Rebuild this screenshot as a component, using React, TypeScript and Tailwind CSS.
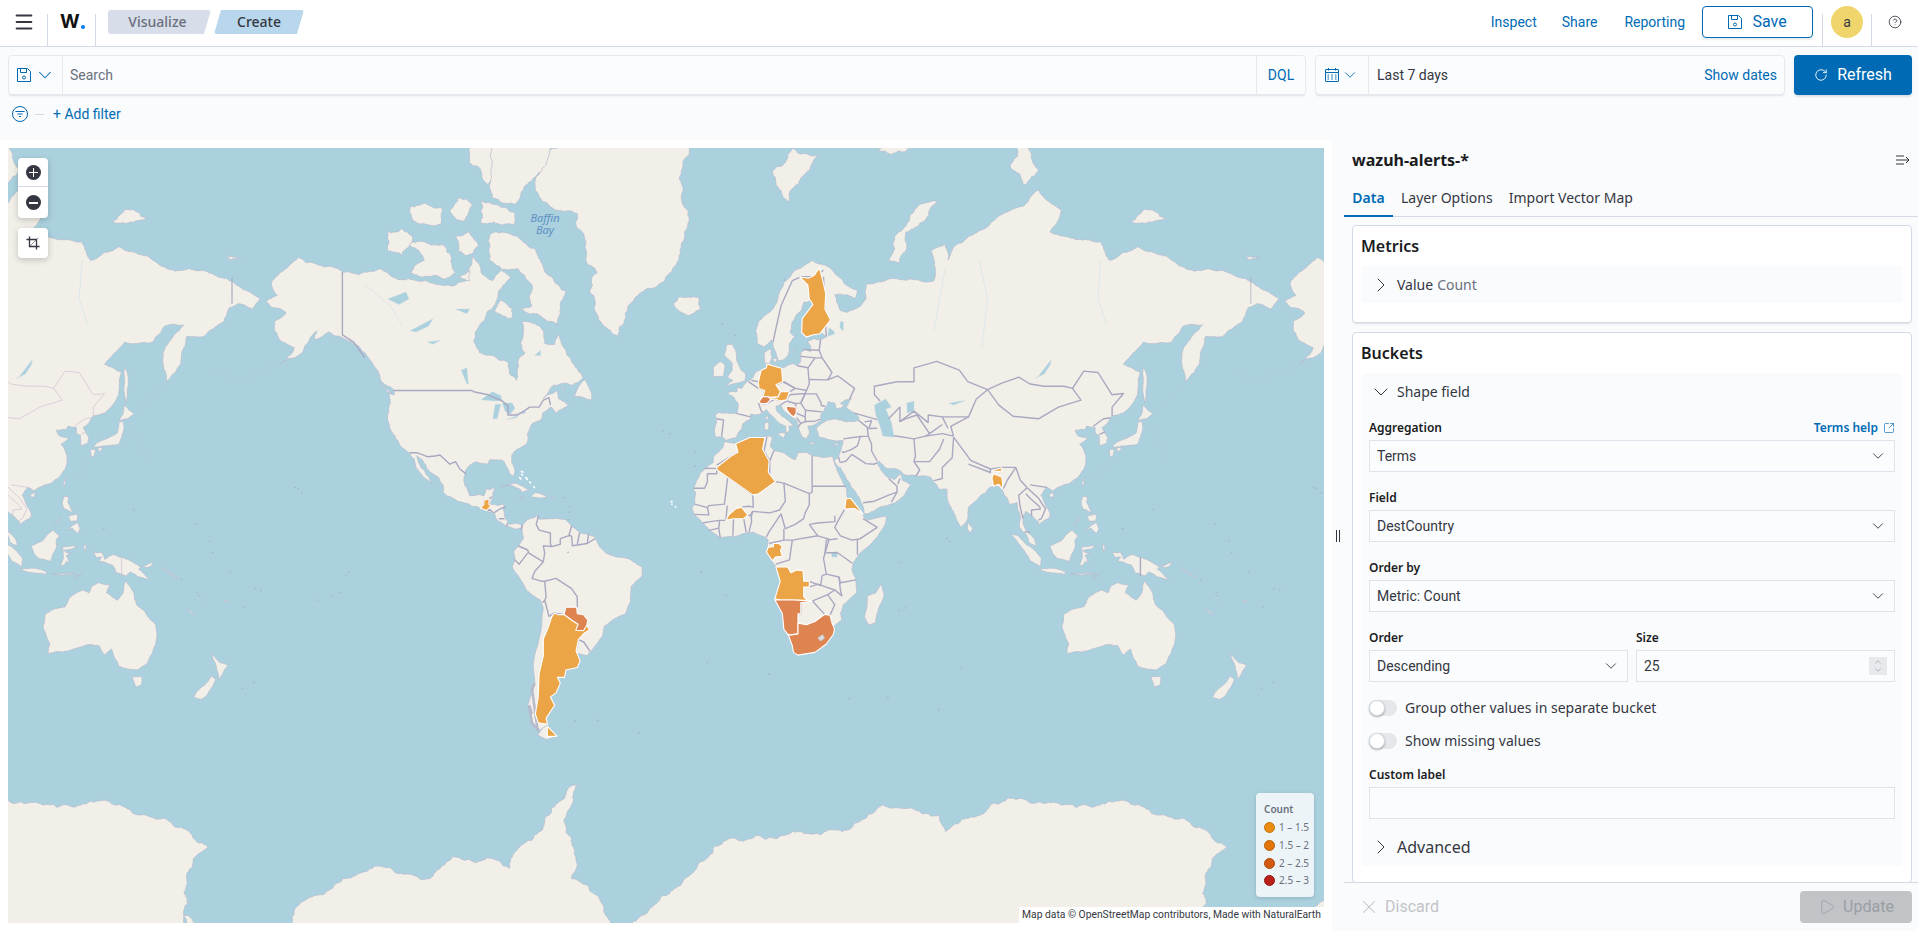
import React from 'react';
import { ChevronDown, ChevronRight, ChevronUp, RotateCw, CircleHelp, SquareArrowOutUpRight, X, Play, Menu } from 'lucide-react';

// Web mercator fitted to the screenshot, in page pixels
const OFFSET = 1018.8;
const toXY = (lon: number, lat: number) => [741.4 + 2.83 * lon, 550 - 162.1 * Math.asinh(Math.tan((lat * Math.PI) / 180))];
const proj = (lon: number, lat: number) => {
  const [x, y] = toXY(lon, lat);
  return `${x.toFixed(1)} ${y.toFixed(1)}`;
};
const poly = (pts: number[][]) => 'M' + pts.map(p => proj(p[0], p[1])).join('L') + 'Z';
const line = (pts: number[][]) => 'M' + pts.map(p => proj(p[0], p[1])).join('L');

// Breaks the long straight coast segments up so they read as coastline
const rough = (pts: number[][], k: number, seed: number) => {
  let s = seed * 7919 + 13;
  const rnd = () => {
    s = (s * 16807) % 2147483647;
    return (s % 1000) / 500 - 1;
  };
  const out: number[][] = [];
  const split = (a: number[], b: number[]) => {
    const dx = b[0] - a[0];
    const dy = b[1] - a[1];
    const len = Math.hypot(dx, dy);
    if (len < 2.5) {
      out.push(b);
      return;
    }
    const r = rnd() * k;
    const m = [(a[0] + b[0]) / 2 - dy * r, (a[1] + b[1]) / 2 + dx * r];
    split(a, m);
    split(m, b);
  };
  const xy = pts.map(p => toXY(p[0], p[1]));
  xy.forEach((p, i) => split(p, xy[(i + 1) % xy.length]));
  return 'M' + out.map(p => `${p[0].toFixed(1)} ${p[1].toFixed(1)}`).join('L') + 'Z';
};

const LAND: number[][][] = [
  // Eurasia
  [[-9,37],[-9.5,38.7],[-8.8,41.5],[-9.2,43.1],[-8,43.7],[-4,43.4],[-1.8,43.4],[-1.2,45],[-1.2,46],[-2.5,47.3],[-4.7,48.2],[-4.7,48.6],[-3,48.8],[-1.6,48.7],[-1.6,49.7],[0.1,49.5],[1.6,50.8],[3.2,51.4],[4.2,52.1],[4.8,53],[6.9,53.5],[8.5,53.7],[8.9,54.2],[8.2,55.5],[8.1,57],[10.5,57.7],[10.5,56.5],[10.9,56.3],[10,55],[11,54.4],[12.5,54.4],[14.2,53.9],[16.5,54.6],[18.5,54.8],[19.8,54.4],[21,55.3],[21,57],[22.5,57.7],[24.4,57.2],[24.4,58.3],[23.5,59.2],[25.5,59.6],[28,59.5],[30,60],[28.5,60.6],[25.5,60.3],[22.9,59.9],[21.3,60.7],[21.5,62.5],[25,65],[24.7,65.8],[22,65.5],[21.2,64.3],[18,62.5],[17.2,60.8],[18.8,60],[17,58.7],[16.5,56.5],[14.3,55.5],[13,55.4],[12.5,56.3],[11.2,58.8],[10.6,59.4],[8,58.1],[5.6,58.7],[5,61],[6,62.5],[10,64],[13,66.5],[15,68.3],[19,69.8],[25,71],[31,70.2],[33,69.4],[41,67.2],[40,66.1],[35,66.7],[33,66.6],[35,64.3],[37.5,64],[40.5,64.6],[44,66],[44,68],[53,68.8],[60,68.7],[68,68.5],[67,72],[72,72.8],[73,71],[75,72.5],[80,73.5],[87,74.5],[100,76.4],[105,77.6],[113,76],[109,74],[113,73.6],[127,73],[130,71],[140,72.5],[150,71.5],[160,69.7],[170,69.8],[178,68.8],[185,67.2],[190,66],[187,64.5],[182,65.3],[179,64.7],[177,62.5],[170,60],[164,60],[163,58],[162,55],[160,53],[156.7,51],[155.7,57],[160,60.5],[163,62],[156,61.7],[152,59],[142,59],[135,54.7],[141,53],[140,48],[135,43.5],[131,42.7],[129.5,41],[127.5,39.7],[129.5,37],[129,35.2],[126.5,34.5],[126.5,37.5],[125,38],[125,39.6],[122,40],[121.5,39],[118,39],[119,37.3],[122.5,37],[119.5,35],[121.8,31.5],[121.5,28.5],[119,25],[116,22.9],[113,22],[110,20.5],[108,21.6],[105.8,19],[109,13],[109,11.5],[105,8.7],[105,10],[102,12.5],[100.5,13.5],[99.5,11],[99.5,9.2],[100.5,7],[103.5,4],[104,1.3],[101.5,2.7],[100.3,6],[98.3,8],[98.5,12],[97.5,16.5],[94.5,16],[94,18],[92,21.5],[90,22],[88,21.7],[86.5,20],[82,16.5],[80.2,15],[80,11],[77.5,8],[76,10.5],[73,17],[72.7,21],[70,21],[69,22.5],[67,24.8],[62,25.2],[57.5,25.7],[56,27],[51,27.8],[48.5,30],[48,29.5],[50,26.5],[51.5,25],[54,24.2],[56.3,26],[56.8,24],[59.8,22.5],[57.7,19],[55,17],[52,15.7],[45,12.8],[43.3,12.7],[42.7,16],[39,21.5],[35,28],[34.5,28],[32.6,30],[34.3,31.2],[36,36],[32,36.1],[30.5,36.3],[27.5,37],[26.5,39.5],[29,41],[33,42],[37,41.2],[41.6,41.5],[41,43],[37,45],[39,47.2],[35,46],[36.5,45.3],[33.5,44.5],[33,46],[30.7,46.4],[28,43],[28.2,41.5],[26.5,40.7],[23.5,40],[24,38],[23,36.5],[21.5,37],[20,40],[19.5,41.7],[16,43.5],[13.7,45.5],[12.3,45.3],[12.5,44],[16,41.8],[18.5,40.2],[16.8,40],[17,39],[16,38],[15.7,40],[12.5,41.5],[10.5,43],[8.8,44.4],[6.5,43.2],[3.2,43.2],[3.2,41.9],[0.5,40.7],[-0.3,39],[-2,36.8],[-5.5,36],[-6.5,37]],
  // Africa
  [[-5.9,35.8],[-2,35.2],[3,36.9],[10,37.3],[11,36.9],[10.2,34.3],[11.5,33.1],[15.3,32.3],[19,30.3],[20,32.5],[23,32.6],[25,31.6],[29,31],[32.3,31.3],[32.6,30],[33.7,27.5],[35.5,24],[37.2,21],[37.3,18.5],[39.5,15.5],[43,12.5],[43.3,11.5],[44.5,10.5],[51.2,11.9],[50.8,9],[48,4.5],[42,-1],[39.5,-4.5],[39,-7],[40.5,-10.5],[40.7,-15],[36,-19],[35,-22],[35.5,-24],[32.8,-26],[32.5,-28.5],[30,-31.5],[26,-34],[20,-34.8],[18.4,-34],[18,-32],[15,-27],[14.5,-22],[11.8,-17],[13.7,-11],[12,-5.5],[9,-1],[9.5,3.5],[8.5,4.5],[5,5.8],[4.5,6.3],[1,5.9],[-2,4.8],[-7.5,4.4],[-11,6.7],[-13.2,9],[-15,11],[-16.8,12.5],[-17.5,14.7],[-16.5,16],[-16.2,20],[-17,21],[-14.5,26.2],[-10,29.5],[-9.7,31.5],[-6.5,34]],
  // North America
  [[-168,65.6],[-164,66.5],[-166,68.3],[-163,69.5],[-156.5,71.3],[-150,70.5],[-141,69.6],[-135,69.3],[-128,70],[-125,69.5],[-115,68.5],[-108,68],[-102,67.8],[-97,68.5],[-95,71.5],[-92,69.5],[-88,68.5],[-85,69.8],[-81.5,69],[-86,66.5],[-87,65.2],[-90,64],[-93,61.5],[-94.5,59],[-92.5,57],[-88,56.5],[-82.5,55.2],[-82,52.8],[-79.5,51.3],[-79,52],[-79,55],[-76.5,57],[-78,58.8],[-77.5,62.5],[-73,62.2],[-70,61],[-69.5,58.8],[-66,58.5],[-64.5,60.3],[-61.5,56.5],[-57,53],[-56,51.8],[-60,50.2],[-66.5,50.2],[-70,47.2],[-65,49],[-64.5,47],[-61,45.5],[-65.5,43.5],[-67,45],[-70,43.7],[-70.5,41.8],[-74,40.6],[-75.5,38],[-76,35],[-78,34],[-81,32],[-81.2,29.5],[-80,26.8],[-80.5,25.2],[-81.8,26],[-82.8,28],[-84,30],[-89,30.3],[-89.5,29],[-94,29.7],[-97.2,27.5],[-97.8,22.5],[-95.8,18.7],[-91,18.8],[-90.5,21],[-87,21.5],[-88,18],[-88.8,15.8],[-84,15.9],[-83.5,11],[-82,9],[-79.5,9.5],[-77.4,8.7],[-77.5,7.5],[-80,7.3],[-83,8.3],[-85.8,10],[-87.5,13],[-92,14.5],[-96,15.8],[-102,18],[-105.5,20],[-105.5,22.5],[-109,26],[-112.5,30],[-114.7,31.7],[-112,27],[-110,24],[-109.5,23],[-112,24.7],[-115,28],[-117.2,32.5],[-120.5,34.5],[-122.5,37.5],[-124.3,40.3],[-124,46],[-124.7,48.4],[-122.5,48],[-123,49.2],[-127,51],[-130,54.5],[-133,57],[-137,58.7],[-141,59.8],[-146,60.8],[-151,59.5],[-150,61],[-153,59],[-158,56],[-163,54.8],[-158,58],[-162,59],[-165,61],[-165,62.5],[-161,64],[-166,64.7]],
  // South America
  [[-77.4,8.7],[-75.5,10.7],[-72,12],[-71.5,10.8],[-68,11],[-62,10.7],[-60,8.5],[-57,6],[-52,4.8],[-50,1],[-48,-1],[-44,-2.5],[-40,-3],[-37,-5],[-35,-6],[-35,-9],[-39,-13],[-39.2,-18],[-41,-22],[-45,-23.7],[-48.5,-26],[-49,-29],[-52.5,-33],[-54.5,-35],[-58,-34.3],[-57,-36.5],[-58,-38.3],[-62,-39],[-62.5,-41],[-65,-41],[-64,-42.5],[-65.5,-45],[-67.5,-46],[-66,-48],[-69,-51],[-68.5,-52.5],[-71,-53.5],[-74,-52.5],[-75.5,-48],[-73,-42],[-73.5,-37],[-71.5,-30],[-70,-20],[-71,-17.5],[-76,-14],[-81,-6],[-80,-3],[-80.5,-0.5],[-78.7,1.5],[-77,4],[-77.5,7]],
  [[-68.6,-52.7],[-65.2,-54.8],[-69,-55.5],[-72,-54.5],[-70,-53]],
  // Greenland and the Arctic islands
  [[-73,78.2],[-68,80.2],[-60,82],[-45,82.7],[-30,83.5],[-22,82],[-18,80.5],[-19,76],[-20,74],[-22,71.5],[-27,68.5],[-33,67.5],[-38,65.7],[-41,63],[-43.5,60],[-46,60.7],[-49,62],[-51.5,64],[-53.5,67],[-51,69.5],[-54.5,70.5],[-55,73],[-58,75.7],[-66,76],[-71,77]],
  [[-65,61.8],[-66.5,62.5],[-72,63.8],[-78,64.5],[-74,65],[-74,68],[-79,70],[-85,70],[-89,71],[-89,73.7],[-81,73.7],[-76,72.8],[-71,71],[-67,69],[-62,67],[-64,65]],
  [[-117,69.5],[-105,68.7],[-101,69.5],[-105,72.7],[-109,72.7],[-118,72.7],[-112,71]],
  [[-125,72],[-120,71.5],[-116,73.5],[-120,74.3],[-125,74]],
  [[-88,77],[-80,76.5],[-76,78],[-68,80.8],[-62,82.5],[-75,83],[-90,82],[-90,79]],
  [[-92,74.8],[-80,74.7],[-80,75.7],[-92,76.8]],
  [[-96,79.5],[-90,78],[-88,80.5],[-93,81.3]],
  [[-116,75],[-106,74.8],[-106,76.2],[-117,76.3]],
  [[-100,72],[-97,71.5],[-93,72.5],[-96,74],[-101,73.7]],
  [[-103,76],[-98,75],[-95,76.5],[-100,77]],
  [[-87,64],[-81,63],[-81,64.5],[-85,65.8]],
  [[-100,69],[-96,68.5],[-96,69.8]],
  [[-59,47.7],[-53,46.7],[-53,48.5],[-55.5,51.5],[-57.5,50]],
  [[-64,49.9],[-62,49.4],[-63,49.2]],
  [[-128,50.8],[-123.5,48.4],[-125,48.7]],
  [[-22,66.3],[-24,65.3],[-22,64.2],[-18.5,63.5],[-14.5,64.5],[-14.8,66],[-18,66.2]],
  [[11,79],[15,77],[17,76.7],[21,78.5],[27,80],[18,80.4]],
  [[52,71],[56,70.7],[58,74],[69,76.8],[62,76.2],[54,73.5]],
  [[95,79.2],[100,78],[105,79],[98,80.8]],
  [[138,75],[145,74.9],[150,75.3],[142,76]],
  [[179,71],[183,71.3],[178,71.5]],
  [[48,80.3],[58,80.2],[62,81],[52,80.9]],
  // Britain and the Mediterranean
  [[-5.5,50.1],[1.3,51.2],[1.6,52.7],[-0.2,53.6],[-1.7,55.5],[-2,57.5],[-3.2,58.6],[-5.2,58.5],[-6,56.5],[-3.2,54.9],[-3.2,53.4],[-5,52],[-3,51.3]],
  [[-10,52],[-6.2,52.2],[-5.7,54.6],[-7.5,55.3],[-10,54]],
  [[8.2,39],[9.7,39.2],[9.5,41.2],[8.2,40.8]],
  [[8.7,41.6],[9.5,42],[9.4,43],[8.7,42.5]],
  [[12.5,38],[15.6,38.2],[15.1,36.7]],
  [[23.6,35.5],[26.2,35.2],[24.8,34.9]],
  [[32.4,34.8],[34.5,35.6],[33.5,34.6]],
  [[10.9,55.7],[12.5,56],[12.3,55]],
  [[18.2,57],[19,57.9],[18.8,57.3]],
  // Japan and the east
  [[141.9,39.5],[141.5,41.4],[140,41],[139.5,38.2],[136.7,37],[132.5,35.5],[131,34.2],[132.5,34.2],[135.5,34.5],[136.9,34.6],[140,35],[141,37]],
  [[140.2,41.6],[143.2,42],[145.4,43.3],[142,45.5],[141.5,43.3]],
  [[130,33.5],[131.8,33.5],[131,31.2],[130.3,31.4]],
  [[132.5,33.8],[134.5,34.2],[134,33.4],[133,32.8]],
  [[142,54.2],[143.2,52.5],[143,49.2],[142.5,46],[142,48],[142,51.5]],
  [[120.2,23],[121.5,25.2],[121,22]],
  [[108.8,19.3],[110.5,20],[110.2,18.5],[109,18.3]],
  [[120.5,18.5],[122.3,18.4],[122,16.5],[124,13],[122,14],[120.7,14.3],[120,16.5]],
  [[125.5,9.7],[126.3,7.5],[125.5,5.8],[123.5,7.7],[122,7.2],[123.7,8.7]],
  [[122,11.8],[125.5,12.5],[125.2,10.2],[123,10]],
  [[117.2,8.5],[119.5,11.3],[119,10]],
  [[80,9.7],[81.8,7.5],[80.8,6],[79.8,7.5]],
  // Indonesia and Oceania
  [[95.3,5.6],[97.5,5.2],[100.5,2],[103.5,0],[106,-3],[105.8,-5.8],[102.3,-4],[100.4,-1],[98.5,1.7]],
  [[105.2,-6.8],[108.5,-6.5],[111,-6.5],[114.5,-7.8],[114.4,-8.7],[110,-8.1],[106.5,-7.4]],
  [[109,1.5],[111.4,2.5],[113,3.2],[116.7,7],[119,5],[117.8,3.5],[118,1],[116.5,-2],[116,-4],[114.5,-3.6],[111.7,-3],[110,-1.2]],
  [[119.5,-5.5],[120.5,-2.7],[120,0.8],[121,1.2],[125,1.5],[123.5,0.3],[120.5,0],[121.5,-1],[123.2,-0.9],[121.5,-2],[122.5,-4.8],[121.5,-4],[120.5,-5.5]],
  [[127.5,2],[128.5,1.5],[128,-0.7],[127.7,0.5]],
  [[116.2,-8.4],[119,-8.3],[123,-8.3],[125,-8.5],[120,-8.9]],
  [[124,-10],[127,-8.4],[125,-9.2]],
  [[131,-0.8],[134,-0.8],[135,-3.3],[138,-1.6],[141,-2.6],[145,-4.3],[147.8,-6],[147,-6.8],[150.8,-10.3],[147,-9.5],[144,-7.7],[142.5,-9.2],[139,-8],[138,-5.5],[133,-4],[134,-2.5],[132,-2.7]],
  [[148.3,-5.7],[152.2,-4.2],[151.5,-5.6],[150,-6.2]],
  [[155,-6],[156,-7],[160,-9.5],[161,-10],[158,-8]],
  [[113.2,-26],[114,-22],[116.7,-20.6],[121,-19.7],[122.3,-17],[125,-15],[127,-14],[129.5,-15],[130.8,-12.4],[132.8,-11.5],[136.8,-12.2],[135.7,-15],[139.5,-17.5],[141.5,-15],[142.5,-10.8],[145.3,-15],[146.3,-19],[149,-21],[153,-25.5],[153.5,-28.5],[152.5,-32.5],[150,-37.3],[146.5,-39],[143.5,-38.8],[140,-38],[138.2,-35],[137.5,-33],[135,-34.8],[133,-32],[129,-31.7],[124,-33],[120,-33.9],[115,-34.3],[115.7,-31.5]],
  [[144.7,-40.8],[148.2,-40.8],[148,-43],[146,-43.6]],
  [[172.7,-34.5],[174.5,-36],[175.8,-37],[178.5,-37.7],[177,-39.5],[175.3,-41.6],[174.9,-39.5],[174.5,-38]],
  [[172.7,-40.6],[174.2,-41.5],[172.8,-43.7],[171,-45.7],[169,-46.6],[166.5,-46],[168.5,-44],[171,-42.5]],
  [[164,-20.2],[167,-22.2],[166.2,-22]],
  [[177.2,-17.5],[178.5,-17.8],[178,-18.2]],
  [[44.5,-16.2],[47.5,-15],[49.3,-12],[50.4,-15.5],[47.5,-24.8],[45,-25.5],[43.5,-23],[44.3,-20]],
  // Caribbean
  [[-84.8,22],[-80,23],[-75,20.7],[-77.5,19.9],[-78,20.8],[-82,22.4]],
  [[-74.4,18.5],[-72.8,19.9],[-68.5,18.6],[-71,18],[-72.5,18.2]],
  [[-78.3,18.4],[-76.3,18],[-77,17.8]],
  [[-67.2,18.4],[-65.7,18.3],[-66.5,18]],
  // Antarctica, over one whole turn of the map
  [[-197,-78],[-190,-79.5],[-170,-80],[-162,-79.5],[-158,-77.7],[-145.7,-76],[-135,-74.5],[-128,-73.8],[-110,-75],[-102,-72.8],[-90,-73],[-82,-74],[-71,-70],[-67,-67],[-61,-64],[-58,-63.5],[-62,-70],[-60,-75],[-45,-79],[-35,-78],[-28,-76.5],[-20,-75],[-12,-73],[-5,-71],[5,-70.5],[20,-70],[30,-70],[40,-69],[50,-66.5],[60,-67],[70,-68],[72,-70],[78,-68.5],[88,-66.5],[100,-65.8],[115,-66.5],[130,-66],[140,-66.5],[150,-68],[160,-69.5],[166,-70.5],[171.6,-71.8],[164,-74.5],[163,-76.3],[163,-78],[163,-85],[-197,-85]],
];

const WATER: number[][][] = [
  [[47,45.5],[51,47],[53,45],[51,44.5],[53,41],[54,37],[50,37.3],[49,40],[47.5,43]],
  [[58.5,46],[61,46.5],[61,44],[58.5,43.5]],
  [[73.5,46],[79,46.6],[75,45.5]],
  [[103.7,51.7],[105,52.2],[109.5,55.7],[109,54.5],[107,52.7]],
  [[30.5,60],[33,60.5],[32.5,61],[31,61.5]],
  [[34.8,61.5],[36,61],[36,62.5],[35,62.5]],
  [[31.8,-1],[34,-0.5],[33.8,-2.5],[32,-2.5]],
  [[-92,46.8],[-88,48.7],[-85,47.8],[-84.6,46.6],[-87,46.5]],
  [[-87.8,42],[-86.3,42],[-85,45.7],[-87,45.7]],
  [[-84.5,46],[-81,46],[-80,44.7],[-81.7,43.2],[-83.5,44]],
  [[-83,41.8],[-79,42.8],[-79.5,42.3]],
  [[-79.7,43.3],[-76.3,44],[-76.5,43.4]],
  [[-125,66],[-118.5,67],[-117.5,66],[-121,65.2]],
  [[-117,61],[-109,63],[-110.5,61.8],[-115,60.8]],
  [[-111,59],[-106.5,59.3],[-109,58.6]],
  [[-99,53.5],[-97,54],[-96.5,50.5],[-97,50.5]],
  [[-73,56.5],[-71,57.5],[-71,56.5]],
  [[-101,64.5],[-96,64.5],[-97,63.8]],
];

const RIVERS: number[][][] = [
  [[129,62],[126,66],[127,71]],
  [[68,61],[70,66],[72,70]],
  [[85,58],[87,66],[84,71]],
  [[-120,62],[-124,65],[-133,68]],
];

const BORDERS: number[][][] = [
  [[-123,49],[-95.2,49],[-94.6,48.7],[-89.5,48],[-84.5,46.5],[-82.5,45.3],[-82.5,43],[-79,43],[-76.5,44.2],[-74.8,45],[-71.5,45],[-70,46.7],[-68,47.3],[-67.5,45.5]],
  [[-141,69.6],[-141,60.3],[-137,59],[-133,56]],
  [[-117.1,32.5],[-114.7,32.5],[-111,31.3],[-108.2,31.5],[-106.5,31.8],[-103,29],[-101,29.8],[-99.5,27.5],[-97.2,25.9]],
  [[-92.2,14.6],[-91,16],[-91,17.3],[-89.2,17.8],[-88.2,18.5]],[[-89.2,17.8],[-89.2,15.8],[-88.3,15.7]],[[-90,13.8],[-89.2,14.3],[-87.8,13.2]],[[-87.5,13],[-85,14.5],[-83.2,15]],[[-85.7,11],[-83.7,11]],[[-83,8.3],[-82.6,9.5]],[[-77.4,8.7],[-77.9,7.2]],
  [[-71.7,12],[-72.5,9],[-71.5,7],[-67.5,6],[-67.5,2],[-67,1.2],[-70,1.5],[-69.5,-1],[-70,-4.2]],[[-78.8,1.4],[-75.5,0],[-75.2,-1],[-70,-4.2]],[[-80.3,-3.4],[-78.5,-5],[-75.5,-1]],[[-60,8.5],[-61,5],[-60,5.1]],[[-67,1.2],[-64,2],[-64,4],[-60.7,5.2]],[[-57.2,6],[-58,2]],[[-54,5.7],[-54.5,2.3]],[[-60,5],[-59.7,1.5],[-54.5,2.3],[-51.7,4]],[[-70,-4.2],[-73,-7.5],[-74,-10],[-70.5,-11],[-69.5,-11]],[[-69.5,-11],[-65.5,-10],[-60,-13.5],[-58,-16.3],[-58,-20]],[[-69.5,-11],[-69,-16.5],[-69.5,-17.5]],[[-70.3,-18.3],[-69.5,-17.5],[-68,-22.8],[-66.2,-21.8],[-62.7,-22.2]],[[-58.4,-33.5],[-57.6,-30.2],[-55.7,-30.9],[-53.5,-33.7]],
  [[-1.8,43.4],[3.2,42.5]],[[2.5,51],[6,49.5],[8.2,49],[7.6,47.6]],[[6,46.2],[7,44],[7.5,43.8]],[[3.5,51.3],[6,51]],[[-8.8,42],[-6.3,41.7],[-7,37.2]],[[8.7,54.9],[9.7,54.8]],
  [[14.6,51],[19,49.5],[23,49],[24,50.5],[23.5,54],[19.8,54.4]],[[12.2,50.3],[15,51],[19,49.5],[17,48.7]],[[17,48],[22.5,48.3],[23,49]],[[16,46.8],[17,48]],[[22.5,48.3],[21,46],[19,45.9],[16,46.5]],[[21,46],[22.5,48.2],[26.5,48.2],[28.2,46],[28.2,45.4],[29.6,45.2]],[[22.7,44.2],[28.5,43.8]],[[19,46],[19.3,45],[19.4,43.5],[22.5,42.5],[22.7,44.2],[21,46]],[[22.7,41.3],[26.5,41.4]],[[19.5,42.3],[21,40.8],[20,39.7]],[[21,40.8],[22.7,41.3],[22.5,42.5]],[[13.7,45.5],[16,46.5]],[[7,45.9],[9,45.9],[12,47],[13.7,46.5]],
  [[23.5,54],[26,56],[28.5,56],[32,53],[30.5,51.4],[24,51.5]],[[30.5,51.4],[34,52.3],[40,49.5],[38.2,47]],[[21,56.3],[26,56]],[[21.8,57.6],[27.5,57.5],[28,59.5]],[[28.5,56],[27.5,57.5]],[[11.2,59],[12,61],[14,65],[18,68.5],[21,69]],[[21,69],[25.8,69],[29,69.8]],[[30,60],[29.5,64],[29,69]],
  [[26.5,41.5],[28,41.9]],[[36,36.5],[42,37.2],[44.8,37.3],[44.5,39.7],[41.6,41.5]],[[44.8,37.3],[46,35],[46,33],[48,30]],[[42,37.2],[41,34.5],[38.8,33.4],[36,32.5],[35.7,33]],[[39,32],[44,29.2],[47,29],[48,29.5]],[[43,16.5],[47,17],[52,19],[55,20],[55,22],[52,24.5]],[[55,20],[53,16.7]],[[35,29.5],[37,30],[39,32]],[[34.3,31.2],[34.9,29.5]],[[40,43.5],[48,41.8]],[[43.5,41.2],[46,41.5],[45,39.4],[48,39.5]],[[55.3,22.7],[56,24.5]],
  [[61,36.5],[61.5,31.5],[61,29.8],[63,27.2],[61.6,25.2]],[[54,37.4],[61,36.5]],[[61,29.8],[66.5,29.8],[70,33.5],[71.5,36.5]],[[61,36.5],[65,37.3],[71,38],[74.9,37.3]],[[68,23.8],[71,24.5],[71,28],[74.5,31],[75,37]],[[75,37],[79,32.5],[81,30.2],[88,27.5],[92,28],[97,28]],[[80.2,29],[88,26.4],[88,27.5]],[[97,28],[94,24],[93,22],[92.3,21]],[[97,28],[98.5,24],[101,21.5]],[[101,21.5],[98,19],[98.5,15],[99.5,11]],[[101,21.5],[105,18],[107,15],[107.5,14.5],[106,11],[105,10.5]],[[100.5,19.5],[102,18],[105.5,15],[105.5,14]],[[102,22.4],[108,21.6]],[[102.5,12],[102.5,14],[105.5,14.3]],[[100,6.5],[102,6.2]],
  [[49,46.5],[47,48],[47,50],[55,51],[61,51],[61,54],[69,55.3],[77,53.5],[80,51],[87,49.2]],[[87,49.2],[83,47],[80.3,42.5],[74,40],[74.9,37.3]],[[80.3,42.5],[71,42.5],[66,43],[66,41],[61,44],[56,41.3],[56,45],[52,42]],[[71,42.5],[73,39.5]],[[56,41.3],[58,42],[62,43],[66.5,38]],[[65,37.3],[66.5,38],[71,40.5]],
  [[87,49.2],[92,50.7],[98,52],[102,50.5],[107,50],[114,50],[117,49.5],[120,46.7],[112,45],[105,42],[96,42.7],[91,45.5],[87,49.2]],[[117,49.5],[121,53.3],[126,53],[131,48],[135,48.3],[131,45],[131,42.7]],[[124.3,40],[128,42],[130.5,42.3]],[[126.5,37.8],[128.5,38.5]],
  [[-1.2,35],[-1.2,32.6],[-3.6,31.5],[-8.7,28.7]],[[-8.7,27.7],[-13,27.7]],[[-8.7,27.3],[-8.7,26],[-12,26],[-12,23.4],[-13,21.3],[-17,21.3]],[[-4.8,25],[-8.7,27.3]],[[-4.8,25],[-6,16],[-11.5,15.5],[-12,14.8]],[[4,19.1],[-4.8,25]],[[4,19.1],[4.2,15],[2.5,15.3],[0,15]],[[12,23.5],[15,23],[15.5,17],[13.5,14],[10,13],[4,13.5],[3,12],[2.3,12.3]],[[15,23],[24,19.5],[24,15.7],[22.5,13],[22,11],[19,9],[15.5,7.5],[14,12.7]],[[25,31.6],[25,20],[24,19.5]],[[25,22],[36.9,22]],[[12,23.5],[10,25.5],[10,30],[11.5,33.1]],[[9,37],[8,33],[10,30]],[[24,9],[27,9.5],[33,10],[33,12]],[[36.5,14.3],[34,10],[33,8],[35,5],[39,3.5],[42,4],[48,8],[43,11]],[[41,-1.7],[41,3.9]],[[39.2,-4.7],[34,-1],[30,-1]],[[34,4],[30,3.5],[29.5,-1.3]],[[12.2,-5],[17,-3.5],[18,3.5],[27,5],[31,3.8],[29,-3],[30,-8.5],[28.5,-9],[28,-12.5],[24,-11]],[[15,7.5],[15,3.5],[18,3.5]],[[27,5],[24,9]],[[8.8,4.5],[9.7,6.3],[14,12.7]],[[9.8,2.3],[15,3.5]],[[2.7,6.4],[3.6,10],[3.5,11.7],[4,13.5]],[[1.7,6.2],[0.8,11]],[[-3,5],[-2.8,11]],[[-7.5,4.4],[-8,7.7],[-7.7,10.4],[-5.5,10.4]],[[-13.7,9.5],[-11,10],[-7.7,10.4]],[[-11.5,6.9],[-8,7.7]],[[-16.7,12.5],[-11.5,12.3],[-12,14.8]],[[-16.5,16],[-12,14.8]],[[-5.5,10.4],[-5,15.5]],[[40.5,-10.5],[35,-11.5],[34.5,-9.5],[30,-8.5]],[[24,-13],[27,-12],[30,-13],[33,-14],[30.5,-15.6],[25,-17.8]],[[25.2,-17.8],[29.4,-22.2]],[[31.3,-22.4],[33,-19],[30.5,-15.6]],[[20,-22],[21,-22],[21,-18.3]],[[34.5,-9.5],[35,-14],[35.5,-16],[33,-14]],[[141,-2.6],[141,-9.1]],
];

const ORANGE = '#eba547';
const DARK = '#dd8450';
const COUNTRIES: { fill: string; pts: number[][] }[] = [
  { fill: ORANGE, pts: [[-66.2,-21.8],[-64.5,-22.3],[-62.7,-22.2],[-60,-24],[-57.7,-25.4],[-54.6,-25.6],[-53.7,-27.2],[-55.7,-28.3],[-57.6,-30.2],[-58.4,-33.5],[-57,-36.5],[-58,-38.3],[-62,-39],[-62.5,-41],[-65,-41],[-64,-42.5],[-65.5,-45],[-67.5,-46],[-66,-48],[-69,-51],[-68.5,-52.3],[-71.8,-52],[-72.8,-50],[-71.8,-46],[-71.5,-40],[-70,-35],[-70,-30],[-68.5,-27],[-67,-23]] },
  { fill: ORANGE, pts: [[-68.6,-52.7],[-68.6,-54.9],[-65.2,-54.8]] },
  { fill: DARK, pts: [[-62.7,-22.2],[-62,-19.8],[-58.2,-19.8],[-58,-22],[-55.8,-22.3],[-54.3,-24],[-54.6,-25.6],[-55.8,-27.4],[-58.5,-27.3],[-57.7,-25.4],[-60,-24]] },
  { fill: ORANGE, pts: [[20.6,69],[23.5,67.9],[24,66],[25.3,65.2],[21.5,63],[21.3,60.7],[22.9,59.9],[25.5,60.3],[27.8,60.5],[31.5,62.8],[29.5,64.5],[29.8,66.8],[28.5,68.9],[27.5,70.1],[25.8,69.2],[23.6,68.8]] },
  { fill: ORANGE, pts: [[6,51],[7,53.5],[8.9,54],[9,54.8],[11,54.4],[14.2,53.9],[14.6,51],[12.2,50.3],[13.8,48.7],[13,47.5],[10,47.4],[7.6,47.6],[8.2,49],[6.2,49.5]] },
  { fill: ORANGE, pts: [[9.6,47.2],[13,47.5],[13.8,48.7],[17,48.7],[16,46.8],[13.7,46.5],[12,47],[10.5,46.9]] },
  { fill: DARK, pts: [[6,46.2],[7.6,47.6],[9.6,47.5],[10.4,46.8],[9,45.9],[7,45.9]] },
  { fill: DARK, pts: [[15.8,45.2],[19.3,45],[19.4,43.5],[18.5,42.5],[17.5,43],[16,44.3]] },
  { fill: ORANGE, pts: [[-2,35.1],[-1.2,32.6],[-3.6,31.5],[-8.7,28],[-8.7,27.3],[4,19.1],[6,19.4],[12,23.5],[9.5,26.5],[9.8,30],[7.5,33.5],[8.3,36.9],[3,36.9]] },
  { fill: ORANGE, pts: [[-5.5,10.4],[-4.5,12.3],[-2,14.4],[0,15],[2.3,12.3],[0.8,11],[-2.8,11]] },
  { fill: ORANGE, pts: [[36.5,14.3],[37,17.8],[38.6,18],[43,12.6],[40,14.5]] },
  { fill: ORANGE, pts: [[8.8,-0.7],[9.5,1],[11.3,1.2],[11.3,2.3],[13.2,2.3],[14.5,1.3],[13.8,-0.2],[14.5,-2.2],[12,-2.5],[11,-3.8]] },
  { fill: ORANGE, pts: [[11.8,-17],[13.7,-11],[12.2,-6],[16.3,-5.9],[17.5,-8],[19.5,-7],[21.8,-7.3],[22,-11],[24,-11],[24,-13],[22,-13],[22,-16.2],[23.4,-17.6],[18.5,-17.4],[14,-17.4]] },
  { fill: DARK, pts: [[11.8,-17.3],[14,-17.4],[18.5,-17.4],[23.3,-17.6],[25,-17.8],[21,-18.3],[21,-22],[20,-22],[20,-28.4],[17,-28.8],[16.5,-28.6],[15,-27],[14.5,-22]] },
  { fill: DARK, pts: [[16.5,-28.6],[17,-28.8],[20,-28.4],[20,-25],[23,-25.5],[26,-24.5],[29.4,-22.2],[31.3,-22.4],[32,-25],[32.9,-26.9],[32.5,-28.5],[30,-31.5],[26,-34],[20,-34.8],[18.4,-34],[18,-32]] },
  { fill: ORANGE, pts: [[88.5,24.5],[89,26],[92,25],[92.3,23],[92.2,21],[91,22.6],[89,22],[88.8,23.5]] },
  { fill: ORANGE, pts: [[89,27.2],[92,27.9],[92,26.8],[89,26.8]] },
  { fill: ORANGE, pts: [[-92.2,14.6],[-91,16],[-91,17.3],[-89.2,17.8],[-89.2,15.8],[-88.3,15.7],[-90,13.8]] },
];

const WHITE_BITS: number[][][] = [
  [[-78,26.8],[-77,26.5]],[[-78.5,25],[-77.8,24.2]],[[-76.3,25],[-75.5,24]],[[-75,23.5],[-74.3,23]],[[-73.5,22],[-73,21.4]],[[-77.8,26],[-77.2,25.5]],
  [[-25,17],[-24.3,16.7]],[[-23.5,15.2],[-23,14.9]],[[-24.8,16],[-24.3,15.9]],
];

const DOTS: number[][] = [
  [-155.5,19.6],[-157,21],[-158,21.4],[-176,-20],[-172,-13.7],[-170,-14.3],[-150,-17.6],[-145,-16],[-142,-15],[-140,-9],[-139,-8],[-172.5,-42.5],[-176.5,-44],[-51,-51.6],[-59,-51.7],[-36.5,-54.3],[-5.7,-15.9],[-14.4,-7.9],[-12.3,-37.1],[9.5,-40.3],[37.7,-46.6],[51.5,-46.4],[69.5,-49.2],[77.5,-38.7],[72.5,4],[73.4,3],[57.5,-20.2],[55.5,-21],[55.5,-4.6],[134.5,7.4],[145,14],[167,9],[172,3],[168,-16],[167.5,-15],[179,-8],[173,-1],[162,-10.5],[-25.5,37.8],[-28,38.6],[-16.5,28.3],[-16.5,32.7],[-7,62],[-2.5,60],[15,68.5],[-61.5,-1],[-61,15],[-61,13],[-63,18],[-61.5,10.5]
];

const CHAINS: number[][][] = [
  [[-164,54.5],[-170,52.8],[-178,51.7],[-187,52.8]],
  [[156,50.5],[150,46],[146,44]],
  [[130,31],[128,27],[124,24.5]],
  [[143,42],[146,38],[150,30]],
  [[168,-15],[170,-20]],
];

const roughness = (pts: number[][], i: number) => {
  const mean = pts.reduce((sum, p) => sum + p[1], 0) / pts.length;
  if (i <= 3) return [0.09, 0.04, 0.12, 0.04][i];
  return Math.abs(mean) > 60 ? 0.16 : 0.06;
};
const LAND_PATHS = LAND.map((p, i) => rough(p, roughness(p, i), i + 1));

const World = ({ faint = false }: { faint?: boolean }) => (
  <>
    {LAND_PATHS.map((d, i) => (
      <path key={i} d={d} fill="#f2efe9" stroke="#b7bacb" strokeWidth="0.7" strokeLinejoin="round" />
    ))}
    {RIVERS.map((p, i) => (
      <path key={i} d={line(p)} fill="none" stroke="#d5e6ea" strokeWidth="0.8" />
    ))}
    {WATER.map((p, i) => (
      <path key={i} d={poly(p)} fill="#abd1df" stroke="#c6d8df" strokeWidth="0.4" />
    ))}
    {CHAINS.map((p, i) => (
      <path key={i} d={line(p)} fill="none" stroke="#bfc7d3" strokeWidth="0.7" strokeDasharray="2 3" />
    ))}
    {DOTS.map((p, i) => (
      <path key={i} d={line([p, [p[0] + 0.5, p[1] + 0.3]])} fill="none" stroke="#a5b3c2" strokeWidth="1.1" />
    ))}
    {BORDERS.map((p, i) => (
      <path
        key={i}
        d={line(p)}
        fill="none"
        stroke={faint ? '#d2bfd3' : '#a9a8c1'}
        strokeWidth={faint ? 0.7 : 1.4}
        strokeLinejoin="round"
      />
    ))}
    <path d={line([[180, 68.9], [180, 65.3]])} fill="none" stroke="#b0b0c2" strokeWidth="0.8" />
    <path d={line([[-180, 68.9], [-180, 65.3]])} fill="none" stroke="#b0b0c2" strokeWidth="0.8" />
  </>
);

const WorldMap = () => (
  <svg viewBox="8 148 1316 775" className="block w-full h-full">
    <rect x="8" y="148" width="1316" height="775" fill="#abd1df" />
    <g transform={`translate(${-OFFSET} 0)`}>
      <World faint />
    </g>
    <g transform={`translate(${OFFSET} 0)`}>
      <World />
    </g>
    <World />
    <path d={line([[-74, -50], [-75, -48], [-74, -52], [-72, -53.5], [-74, -44], [-73, -42.5]])} fill="none" stroke="#b7bacb" strokeWidth="2.5" />
    {COUNTRIES.map((c, i) => (
      <path key={i} d={poly(c.pts)} fill={c.fill} stroke="#ffffff" strokeWidth="1.1" strokeLinejoin="round" />
    ))}
    <path d={poly([[27, -29.7], [28.7, -28.7], [29.4, -29.7], [28, -30.6]])} fill="#dcdde2" stroke="#c3c6d3" strokeWidth="0.8" />
    {WHITE_BITS.map((p, i) => (
      <path key={i} d={line(p)} fill="none" stroke="#ffffff" strokeWidth="1.6" />
    ))}
    <text x="545" y="222" textAnchor="middle" fontSize="11" fontStyle="italic" fill="#5d8fc2" fontFamily="Noto Sans, sans-serif">Baffin</text>
    <text x="545" y="234" textAnchor="middle" fontSize="11" fontStyle="italic" fill="#5d8fc2" fontFamily="Noto Sans, sans-serif">Bay</text>
  </svg>
);

const LEGEND = [
  { label: '1 – 1.5', color: 'bg-[#ec8c10] border-[#c17308]' },
  { label: '1.5 – 2', color: 'bg-[#e27408] border-[#b85e06]' },
  { label: '2 – 2.5', color: 'bg-[#d35a10] border-[#a9470c]' },
  { label: '2.5 – 3', color: 'bg-[#ba201a] border-[#961712]' },
];

const SaveIcon = () => (
  <svg viewBox="0 0 14 14" className="h-3.5 w-3.5 shrink-0" fill="none" stroke="currentColor" strokeWidth="1">
    <path d="M0.5 0.5H10.5L13.5 3.5V13.5H0.5Z" />
    <path d="M3.5 0.5V4.5H9.5V0.5" />
    <circle cx="7" cy="9.5" r="1.5" />
  </svg>
);

const CalendarIcon = () => (
  <svg viewBox="0 0 14 14" className="h-3.5 w-3.5 shrink-0" fill="none" stroke="currentColor" strokeWidth="1">
    <rect x="0.5" y="1.5" width="13" height="12" rx="0.5" />
    <path d="M0.5 4.5H13.5M3.5 0V2.5M10.5 0V2.5" />
    <path d="M2.5 7H4M6.2 7H7.8M10 7H11.5M2.5 9H4M6.2 9H7.8M10 9H11.5M2.5 11H4M6.2 11H7.8M10 11H11.5" />
  </svg>
);

const SelectBox = ({ value, className = '' }: { value: string; className?: string }) => (
  <div className={`flex h-8 items-center justify-between border border-[#dfe3ec] bg-[#fbfcfd] pl-[7px] pr-[9px] font-[Roboto,sans-serif] text-sm text-[#343741] ${className}`}>
    <span>{value}</span>
    <ChevronDown className="h-[18px] w-[18px] -mr-[2px] text-[#343741]" strokeWidth={1.2} />
  </div>
);

const Label = ({ children }: { children: React.ReactNode }) => (
  <div className="mb-[3px] flex h-5 items-center pt-[2px] text-xs font-semibold text-[#1a1c21]">{children}</div>
);

const Toggle = ({ label, className }: { label: string; className: string }) => (
  <div className={`flex h-4 items-center ${className}`}>
    <div className="h-4 w-7 rounded-full bg-[#e5e7eb]">
      <div className="h-4 w-4 rounded-full border border-[#d3dae6] bg-white shadow-[0_1px_2px_rgba(0,0,0,0.3)]" />
    </div>
    <span className="ml-2 text-sm text-[#343741]">{label}</span>
  </div>
);

export default function App() {
  return (
    <div className="flex h-[931px] w-full flex-col overflow-hidden bg-white font-['Noto_Sans',sans-serif]">
      {/* Header */}
      <header className="flex h-[47px] shrink-0 items-start border-b border-[#d3dae6] font-[Roboto,sans-serif]">
        <div className="flex h-[44px] w-[47px] items-center justify-center">
          <Menu className="h-[22px] w-[22px] text-[#343741]" strokeWidth={2.2} />
        </div>
        <div className="mt-[14px] flex h-8 w-[49px] items-start border-x border-[#d3dae6] pl-3">
          <span className="-mt-[2px] flex h-[19px] items-end font-[Inter,sans-serif] text-[19px] font-bold leading-[19px] text-[#111]">
            W<span className="mb-[2px] ml-[1px] h-1 w-1 rounded-full bg-[#0079f2]" />
          </span>
        </div>
        <div className="ml-3 mt-[10px] flex gap-[3px] font-['Noto_Sans',sans-serif] text-sm font-medium">
          <div className="flex h-6 w-[103px] items-center justify-center rounded-[3px] bg-[#d7dde9] pr-1 text-[#69707d] [clip-path:polygon(0_0,100%_0,calc(100%-7px)_100%,0_100%)]">Visualize</div>
          <div className="flex h-6 w-[90px] items-center justify-center rounded-[3px] bg-[#b9d7ec] text-[#343741] [clip-path:polygon(7px_0,100%_0,calc(100%-7px)_100%,0_100%)]">Create</div>
        </div>
        <div className="ml-auto mt-[12px] flex text-sm text-[#006bb4]">
          <span className="mr-[25px]">Inspect</span>
          <span className="mr-[27px]">Share</span>
          <span className="mr-[17px]">Reporting</span>
        </div>
        <div className="mt-[6px] flex h-8 w-[111px] items-center justify-center gap-[10px] rounded border border-[#006bb4] text-base text-[#006bb4] shadow-[0_2px_2px_rgba(152,162,179,0.2)]">
          <SaveIcon />
          <span>Save</span>
        </div>
        <div className="ml-[9px] mt-[14px] h-8 w-px bg-[#d3dae6]" />
        <div className="ml-2 mt-[6px] flex h-8 w-8 items-center justify-center rounded-full bg-[#f0d56c] text-sm text-[#343741]">a</div>
        <div className="ml-2 mt-[14px] h-8 w-px bg-[#d3dae6]" />
        <div className="flex h-[44px] w-[46px] items-center justify-center">
          <CircleHelp className="h-3.5 w-3.5 text-[#343741]" strokeWidth={1.4} />
        </div>
      </header>

      {/* Query bar */}
      <div className="h-[93px] shrink-0 bg-[#fafbfd] pl-2 pr-[6px] pt-2 font-[Roboto,sans-serif]">
        <div className="flex h-10 gap-[9px]">
          <div className="flex flex-1 items-center rounded-sm border border-[#e6e9f0] bg-[#fbfcfd] shadow-[0_2px_2px_-1px_rgba(152,162,179,0.3)]">
            <div className="flex h-full w-[54px] items-center justify-center gap-[3px] border-r border-[#e6e9f0] pl-[2px] text-[#006bb4]">
              <SaveIcon />
              <ChevronDown className="h-[22px] w-[22px]" strokeWidth={1.1} />
            </div>
            <span className="ml-[7px] text-sm text-[#69707d]">Search</span>
            <div className="ml-auto flex h-full w-[49px] items-center justify-center border-l border-[#e6e9f0] text-sm text-[#006bb4]">DQL</div>
          </div>
          <div className="flex w-[470px] items-center rounded-sm border border-[#e6e9f0] bg-[#fbfcfd] shadow-[0_2px_2px_-1px_rgba(152,162,179,0.3)]">
            <div className="flex h-full w-[53px] items-center justify-center gap-[2px] border-r border-[#e6e9f0] text-[#006bb4]">
              <CalendarIcon />
              <ChevronDown className="h-[18px] w-[18px]" strokeWidth={1.2} />
            </div>
            <span className="ml-2 text-sm text-[#343741]">Last 7 days</span>
            <span className="ml-auto mr-[7px] text-sm text-[#006bb4]">Show dates</span>
          </div>
          <div className="flex w-[118px] items-center justify-center gap-[9px] rounded bg-[#006bb4] text-base text-white shadow-[0_2px_2px_rgba(152,162,179,0.3)]">
            <RotateCw className="h-3.5 w-3.5" strokeWidth={1.5} />
            <span>Refresh</span>
          </div>
        </div>
        <div className="mt-[9px] flex h-5 items-center text-sm text-[#006bb4]">
          <svg viewBox="0 0 16 16" className="ml-1 h-4 w-4" fill="none" stroke="#006bb4" strokeWidth="1">
            <circle cx="8" cy="8" r="7.5" />
            <path d="M3.5 5.5h9M5.5 8h5M7 10.5h2" />
          </svg>
          <span className="ml-[7px] h-px w-[9px] bg-[#d3dae6]" />
          <span className="ml-[9px]">+ Add filter</span>
        </div>
      </div>

      <div className="flex min-h-0 flex-1">
        {/* Map */}
        <div className="w-[1332px] shrink-0 p-2">
          <div className="relative h-[775px] w-[1316px] overflow-hidden">
            <WorldMap />
            <div className="absolute left-[10px] top-[10px] w-[30px] rounded bg-white shadow-[0_2px_6px_rgba(0,0,0,0.2)]">
              <div className="flex h-[29px] items-center justify-center border-b border-[#d3dae6]">
                <span className="relative flex h-[15px] w-[15px] items-center justify-center rounded-full bg-[#343741]">
                  <span className="absolute h-px w-[9px] bg-white" />
                  <span className="absolute h-[9px] w-px bg-white" />
                </span>
              </div>
              <div className="flex h-[31px] items-center justify-center">
                <span className="flex h-[15px] w-[15px] items-center justify-center rounded-full bg-[#343741]">
                  <span className="h-[2px] w-[9px] bg-white" />
                </span>
              </div>
            </div>
            <div className="absolute left-[10px] top-[80px] flex h-[30px] w-[30px] items-center justify-center rounded bg-white shadow-[0_2px_6px_rgba(0,0,0,0.2)]">
              <svg viewBox="0 0 16 16" className="h-[14px] w-[14px]" fill="none" stroke="#343741" strokeWidth="1.5">
                <path d="M4 0.5V12H15.5M0.5 4H12V15.5" />
                <path d="M14 2L4 12" strokeWidth="0.6" />
              </svg>
            </div>
            <div className="absolute left-[1248px] top-[645px] h-[104px] w-[58px] rounded bg-[#edf4f8] pl-2 pt-[9px] text-[10px] text-[#69707d] shadow-[0_1px_4px_rgba(0,0,0,0.15)]">
              <div className="mb-[3px] h-[14px] font-semibold leading-[14px]">Count</div>
              {LEGEND.map(l => (
                <div key={l.label} className="flex h-[17.7px] items-center gap-[4px] whitespace-nowrap">
                  <span className={`h-[11px] w-[11px] shrink-0 rounded-full border ${l.color}`} />
                  {l.label}
                </div>
              ))}
            </div>
            <div className="absolute bottom-0 right-0 flex h-4 w-[305px] items-center justify-center whitespace-nowrap bg-white font-[Roboto,sans-serif] text-[10.3px] text-[#343741]">
              Map data © OpenStreetMap contributors, Made with NaturalEarth
            </div>
          </div>
        </div>

        {/* Sidebar */}
        <aside className="relative flex min-w-0 flex-1 flex-col bg-[#fafbfd]">
          <div className="absolute left-[4px] top-[390px] flex h-3 gap-[2px]">
            <span className="h-3 w-px bg-[#343741]" />
            <span className="h-3 w-px bg-[#343741]" />
          </div>
          <div className="flex h-10 shrink-0 items-center justify-between pl-5 pr-[7px]">
            <span className="text-base font-bold text-[#1a1c21]">wazuh-alerts-*</span>
            <svg viewBox="0 0 16 12" className="h-3 w-4" fill="none" stroke="#343741" strokeWidth="1">
              <path d="M1 2h8M1 6h13M1 10h8M11 3l3 3-3 3" />
            </svg>
          </div>
          <div className="ml-3 flex h-[37px] shrink-0 border-b border-[#d3dae6] text-sm text-[#343741]">
            <div className="flex h-[37px] w-[49px] items-center justify-center border-b-2 border-[#006bb4] font-semibold text-[#006bb4]">Data</div>
            <div className="flex items-center px-2">Layer Options</div>
            <div className="flex items-center px-2">Import Vector Map</div>
          </div>
          <div className="min-h-0 flex-1 overflow-hidden pl-[20px] pr-[6px] pt-2">
            <div className="mb-[9px] h-[98px] rounded border border-[#d3dae6] bg-white px-2 shadow-[0_2px_2px_-1px_rgba(152,162,179,0.3)]">
              <div className="flex h-10 items-center text-base font-semibold text-[#1a1c21]">Metrics</div>
              <div className="flex h-[37px] items-center rounded bg-[#fafbfd] pl-2 text-sm">
                <ChevronRight className="h-6 w-6 text-[#343741]" strokeWidth={1} />
                <span className="ml-1 text-[#343741]">Value</span>
                <span className="ml-1 text-[#69707d]">Count</span>
              </div>
            </div>
            <div className="rounded border border-[#d3dae6] bg-white px-2 pb-4">
              <div className="flex h-10 items-center text-base font-semibold text-[#1a1c21]">Buckets</div>
              <div className="rounded bg-[#fafbfd] px-2">
                <div className="flex h-[38px] items-center text-sm text-[#343741]">
                  <ChevronDown className="h-6 w-6" strokeWidth={1} />
                  <span className="ml-1">Shape field</span>
                </div>
                <div className="mt-[6px]">
                  <div className="flex justify-between">
                    <Label>Aggregation</Label>
                    <span className="flex h-5 items-center gap-[5px] pt-[2px] text-xs font-semibold text-[#006bb4]">
                      Terms help
                      <SquareArrowOutUpRight className="h-3 w-3" strokeWidth={1.3} />
                    </span>
                  </div>
                  <SelectBox value="Terms" />
                </div>
                <div className="mt-[15px]">
                  <Label>Field</Label>
                  <SelectBox value="DestCountry" />
                </div>
                <div className="mt-[15px]">
                  <Label>Order by</Label>
                  <SelectBox value="Metric: Count" />
                </div>
                <div className="mt-[15px] flex gap-2">
                  <div className="w-[259px]">
                    <Label>Order</Label>
                    <SelectBox value="Descending" />
                  </div>
                  <div className="flex-1">
                    <Label>Size</Label>
                    <div className="flex h-8 items-center justify-between border border-[#dfe3ec] bg-[#fbfcfd] pl-[7px] pr-[7px] font-[Roboto,sans-serif] text-sm text-[#343741]">
                      <span>25</span>
                      <div className="flex h-[18px] w-[18px] flex-col items-center justify-center bg-[#e8e9ec] text-[#8a8f99]">
                        <ChevronUp className="-mb-[1px] h-2.5 w-2.5" strokeWidth={1.5} />
                        <ChevronDown className="-mt-[1px] h-2.5 w-2.5" strokeWidth={1.5} />
                      </div>
                    </div>
                  </div>
                </div>
                <Toggle label="Group other values in separate bucket" className="mt-[18px]" />
                <Toggle label="Show missing values" className="mt-[17px]" />
                <div className="mt-[15px]">
                  <Label>Custom label</Label>
                  <div className="h-8 border border-[#dfe3ec] bg-[#fbfcfd]" />
                </div>
                <div className="mt-[9px] flex h-[38px] items-center text-base text-[#343741]">
                  <ChevronRight className="h-6 w-6" strokeWidth={1} />
                  <span className="ml-1">Advanced</span>
                </div>
              </div>
            </div>
          </div>
          <div className="ml-3 flex h-[49px] shrink-0 items-center justify-between border-t border-[#d3dae6] bg-[#fafbfd] pl-[14px] pr-[6px] font-[Roboto,sans-serif] text-base">
            <div className="flex items-center gap-[5px] text-[#c2c3c6]">
              <X className="h-[22px] w-[22px]" strokeWidth={1.1} />
              <span>Discard</span>
            </div>
            <div className="flex h-8 w-[112px] items-center justify-center gap-[7px] rounded bg-[#c2c3c6] text-[#9a9ea5]">
              <Play className="h-[18px] w-[18px]" strokeWidth={1.1} />
              <span>Update</span>
            </div>
          </div>
        </aside>
      </div>
    </div>
  );
}
